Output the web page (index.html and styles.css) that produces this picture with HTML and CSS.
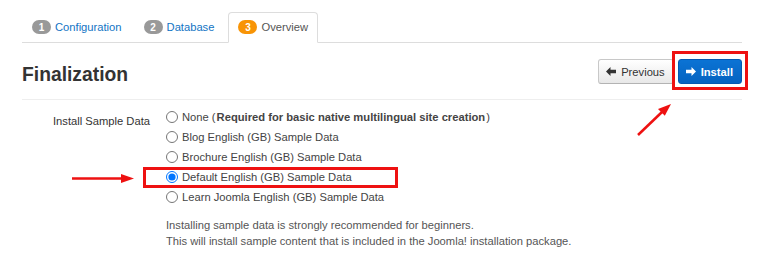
FILE: index.html
```html
<!DOCTYPE html>
<html>
  <head>
    <title>Joomla Installation - Overview</title>
    <meta name="viewport" content="width=device-width">
    <link rel="stylesheet" href="styles.css">
  </head>
  <body>
    <div class="page">
      <ul class="tabs">
        <li class="tab"><span class="badge">1</span><a href="#">Configuration</a></li>
        <li class="tab"><span class="badge">2</span><a href="#">Database</a></li>
        <li class="tab active"><span class="badge badge-warning">3</span><span>Overview</span></li>
      </ul>

      <div class="head">
        <h2>Finalization</h2>
        <div class="actions">
          <button class="btn">
            <svg class="ico" viewBox="0 0 10 9"><path d="M0 4.5 L4.5 0 V2.8 H10 V6.2 H4.5 V9 Z"/></svg>
            Previous
          </button>
          <button class="btn btn-primary">
            <svg class="ico" viewBox="0 0 10 9"><path d="M10 4.5 L5.5 0 V2.8 H0 V6.2 H5.5 V9 Z"/></svg>
            Install
          </button>
        </div>
      </div>

      <div class="form-row">
        <label class="control-label">Install Sample Data</label>
        <div class="controls">
          <label class="radio"><input type="radio" name="sample"> None (<b>Required for basic native multilingual site creation</b>)</label>
          <label class="radio"><input type="radio" name="sample"> Blog English (GB) Sample Data</label>
          <label class="radio"><input type="radio" name="sample"> Brochure English (GB) Sample Data</label>
          <label class="radio"><input type="radio" name="sample" checked> Default English (GB) Sample Data</label>
          <label class="radio"><input type="radio" name="sample"> Learn Joomla English (GB) Sample Data</label>
          <p class="help">
            Installing sample data is strongly recommended for beginners.<br>
            This will install sample content that is included in the Joomla! installation package.
          </p>
        </div>
      </div>

      <!-- annotations drawn on top of the screenshot -->
      <div class="mark mark-install"></div>
      <div class="mark mark-default"></div>
      <svg class="arrows" width="783" height="268" viewBox="0 0 783 268">
        <line x1="72" y1="178.5" x2="124" y2="178.5" />
        <polygon points="121,174 134,178.5 121,183" />
        <line x1="638" y1="135" x2="662" y2="112" />
        <polygon points="664.8,115.8 671,104 658,109" />
      </svg>
    </div>
  </body>
</html>
```

FILE: styles.css
```css
* { margin: 0; padding: 0; box-sizing: border-box; }
body {
  font-family: "Liberation Sans", Arial, sans-serif;
  font-size: 11.2px;
  color: #333;
  background: #fff;
}

.page {
  position: relative;
  width: 783px;
  height: 268px;
  padding: 12px 41px 0 22px;
}

/* tabs */
.tabs {
  display: flex;
  list-style: none;
  height: 31px;
  border-bottom: 1px solid #ddd;
}
.tab {
  display: flex;
  align-items: center;
  height: 31px;
  padding: 0 9px 1px 9px;
  margin-right: 2px;
  border: 1px solid transparent;
  border-radius: 4px 4px 0 0;
}
.tab a {
  color: #1274c4;
  text-decoration: none;
}
.tab.active {
  margin-left: 2px;
  border-color: #ddd;
  border-bottom-color: #fff;
  background: #fff;
  color: #555;
}
.badge {
  display: inline-flex;
  align-items: center;
  justify-content: center;
  width: 19px;
  height: 14px;
  margin-right: 4px;
  border-radius: 7px;
  background: #999;
  color: #fff;
  font-size: 10px;
  font-weight: bold;
}
.badge-warning {
  background: #f89406;
}

/* heading */
.head {
  display: flex;
  justify-content: space-between;
  align-items: flex-start;
  height: 57px;
  border-bottom: 1px solid #eee;
}
.head h2 {
  margin-top: 20px;
  font-size: 19.3px;
  line-height: 24px;
  font-weight: bold;
  color: #333;
}
.actions {
  display: flex;
  gap: 4px;
  margin-top: 16px;
}
.btn {
  display: flex;
  align-items: center;
  gap: 4px;
  height: 25px;
  padding: 0 8px 0 7px;
  font-family: inherit;
  font-size: 11.2px;
  color: #333;
  background: linear-gradient(#fff, #e8e8e8);
  border: 1px solid #c8c8c8;
  border-bottom-color: #b3b3b3;
  border-radius: 3px;
}
.btn .ico {
  width: 10px;
  height: 9px;
  fill: #333;
  margin-right: 1px;
}
.btn-primary {
  color: #fff;
  font-weight: bold;
  background: linear-gradient(#0b73d4, #0563c1);
  border-color: #0559b0;
}
.btn-primary .ico {
  fill: #fff;
}

/* form */
.form-row {
  display: flex;
}
.control-label {
  width: 128px;
  padding-top: 11px;
  line-height: 20px;
  text-align: right;
  color: #333;
}
.controls {
  margin-left: 16px;
  padding-top: 7px;
}
.radio {
  display: flex;
  align-items: center;
  height: 20px;
  color: #444;
}
.radio input {
  width: 12px;
  height: 12px;
  margin: 0 4px 0 0;
}
.radio b {
  margin: 0 1px;
}
.help {
  margin-top: 10px;
  line-height: 16px;
  color: #555;
}

/* annotations */
.mark {
  position: absolute;
  border: 3px solid #ee1111;
}
.mark-install {
  left: 672px;
  top: 51px;
  width: 76px;
  height: 39px;
}
.mark-default {
  left: 143px;
  top: 167px;
  width: 255px;
  height: 21px;
}
.arrows {
  position: absolute;
  left: 0;
  top: 0;
  pointer-events: none;
}
.arrows line {
  stroke: #ee1111;
  stroke-width: 2.5;
}
.arrows polygon {
  fill: #ee1111;
}
```
